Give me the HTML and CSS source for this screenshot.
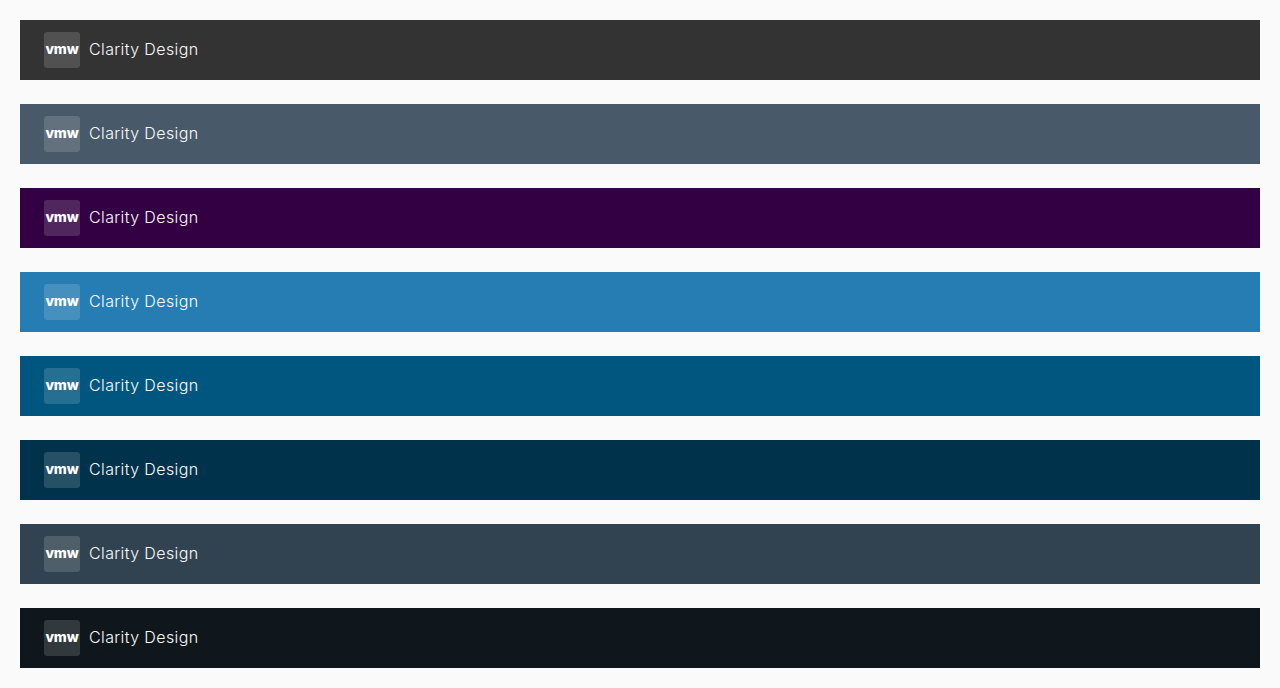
FILE: index.html
```html
<!DOCTYPE html>
<html lang="en">
<head>
  <meta charset="UTF-8">
  <meta name="viewport" content="width=device-width, initial-scale=1.0">
  <title>Clarity Design headers</title>
  <link rel="stylesheet" href="styles.css">
</head>
<body>
  <header class="header header-1"><a class="branding"><span class="logo">vmw</span><span class="title">Clarity Design</span></a></header>
  <header class="header header-2"><a class="branding"><span class="logo">vmw</span><span class="title">Clarity Design</span></a></header>
  <header class="header header-3"><a class="branding"><span class="logo">vmw</span><span class="title">Clarity Design</span></a></header>
  <header class="header header-4"><a class="branding"><span class="logo">vmw</span><span class="title">Clarity Design</span></a></header>
  <header class="header header-5"><a class="branding"><span class="logo">vmw</span><span class="title">Clarity Design</span></a></header>
  <header class="header header-6"><a class="branding"><span class="logo">vmw</span><span class="title">Clarity Design</span></a></header>
  <header class="header header-7"><a class="branding"><span class="logo">vmw</span><span class="title">Clarity Design</span></a></header>
  <header class="header header-8"><a class="branding"><span class="logo">vmw</span><span class="title">Clarity Design</span></a></header>
</body>
</html>
```

FILE: styles.css
```css
html, body { height: 100%; }
body { margin: 0; padding: 20px; box-sizing: border-box; background: #fafafa; font-family: "Inter", "Lato", sans-serif; display: flex; flex-direction: column; gap: 24px; }
.header { height: 60px; flex: none; padding-left: 24px; display: flex; align-items: center; color: #fafafa; }
.branding { display: flex; align-items: center; gap: 9px; }
.logo { width: 36px; height: 36px; box-sizing: border-box; padding-bottom: 3px; border-radius: 3px; background: rgba(255,255,255,0.15); display: flex; align-items: center; justify-content: center; color: #fff; font-weight: 800; font-size: 14px; letter-spacing: -0.2px; }
.title { font-size: 16px; font-weight: 300; letter-spacing: 0.38px; line-height: 20px; padding-bottom: 2px; }
.header-1 { background: #333333; }
.header-2 { background: #485969; }
.header-3 { background: #330044; }
.header-4 { background: #267db3; }
.header-5 { background: #00567f; }
.header-6 { background: #00324b; }
.header-7 { background: #314351; }
.header-8 { background: #0f171c; }
```
